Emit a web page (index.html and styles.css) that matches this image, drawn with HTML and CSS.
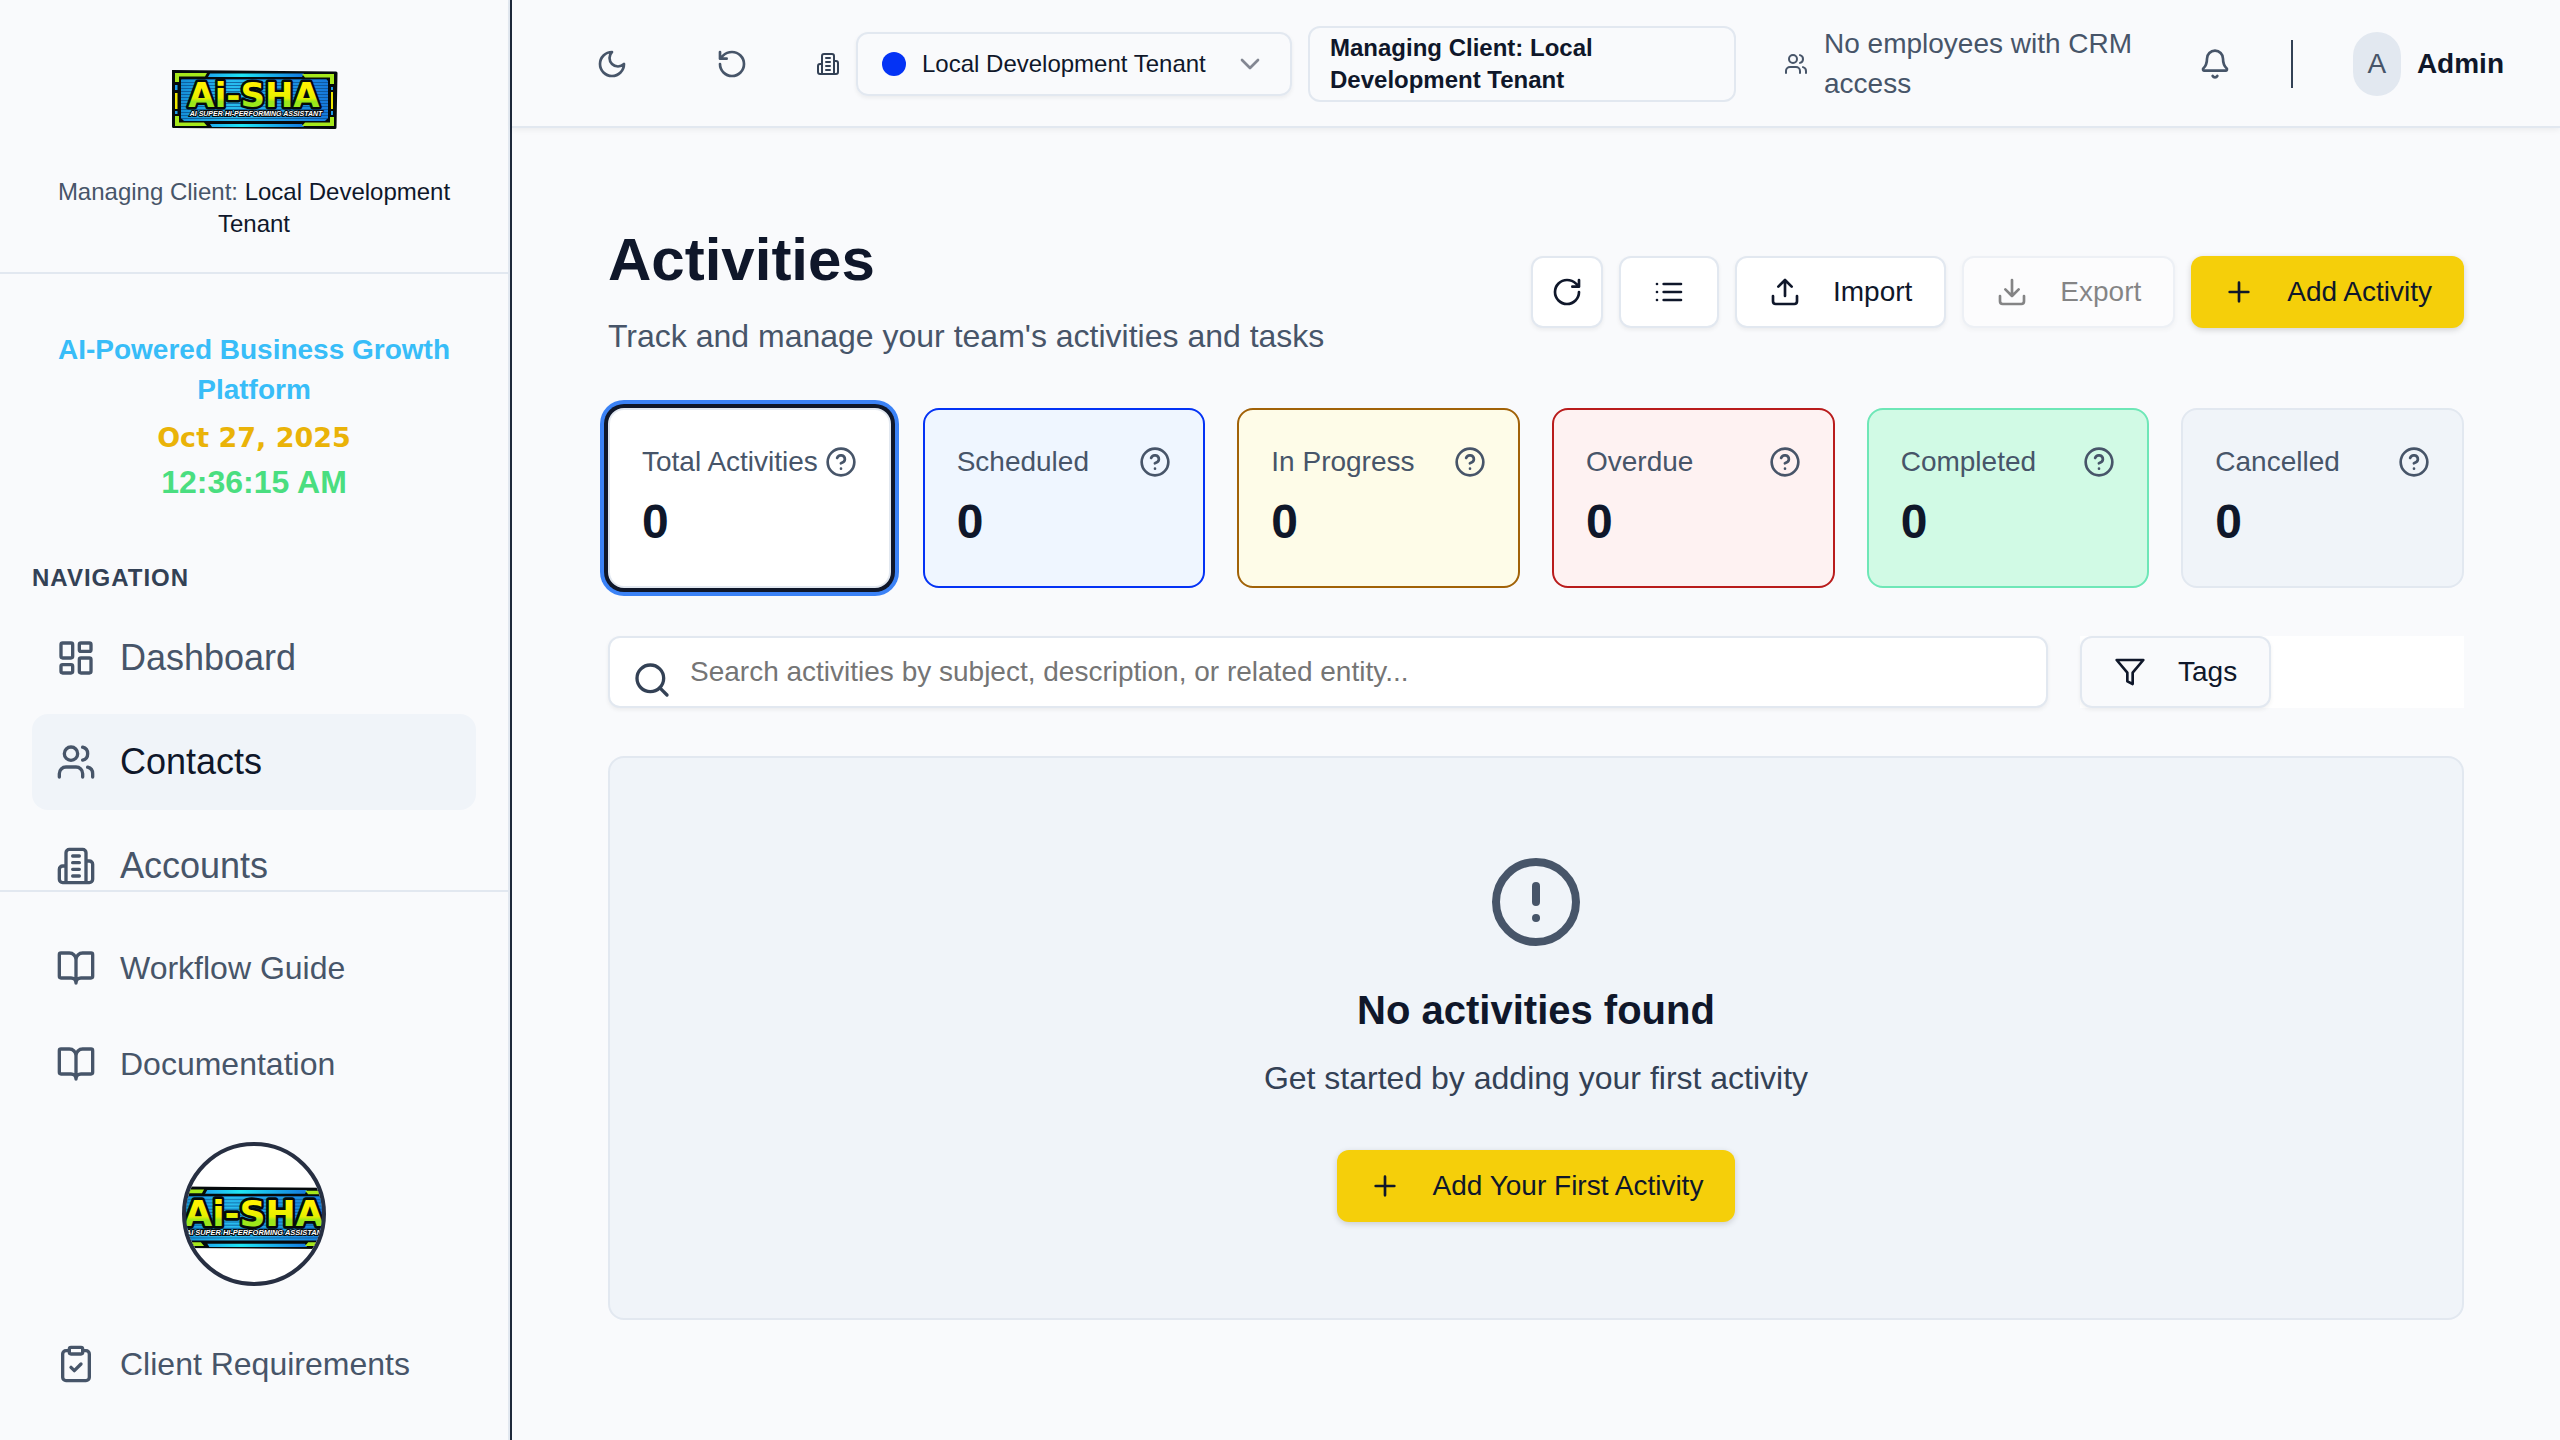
FILE: index.html
```html
<!DOCTYPE html>
<html lang="en">
<head>
<meta charset="utf-8">
<title>Activities</title>
<link rel="stylesheet" href="styles.css">
</head>
<body>
<svg class="sprite" aria-hidden="true">
  <defs>
    <linearGradient id="plate" x1="0" y1="0" x2="1" y2="0"><stop offset="0" stop-color="#1590d8"/><stop offset=".35" stop-color="#28bdf0"/><stop offset="1" stop-color="#1679dc"/></linearGradient>
    <linearGradient id="bar" x1="0" y1="0" x2="1" y2="0"><stop offset="0" stop-color="#1fa8f0"/><stop offset=".35" stop-color="#1fe6f5"/><stop offset="1" stop-color="#1478e0"/></linearGradient>
    <linearGradient id="letters" x1="0" y1="0" x2="0" y2="1"><stop offset=".3" stop-color="#fff200"/><stop offset=".58" stop-color="#e6f000"/><stop offset=".66" stop-color="#9be71a"/></linearGradient>
    <pattern id="lines" width="4" height="3" patternUnits="userSpaceOnUse"><path d="M0 2.5h4" stroke="#0a4a88" stroke-width="1" opacity=".7"/></pattern>
    <symbol id="logo" viewBox="0 0 172 128">
      <path d="M4 38 168 39.500Q169.500 39.500 169.500 41L168.500 95.500Q168.500 97 167 97L5.500 96Q4 96 4 94.500Z" fill="#050a0c"/>
      <path d="M42 41.500H136L134 45H40Z M42 92H134L136 95H44Z" fill="url(#bar)"/>
      <path d="M7 41H39L37 44.500H11V50H7Z M134 42H166V52H162V45.500H137Z M7 84H11V90.500H36L39 94H7Z M134 94 137 90.500H162V85H166V94Z" fill="#a6e81c"/>
      <path d="M7 61h2.500v16H7z M163 60h2v17h-2z" fill="#f0e800"/>
      <path d="M7 53h2.500v5H7z M163 55h2v3h-2z M7 79h2.500v3H7z M163 79h2v4h-2z" fill="#1f9bea"/>
      <path d="M14 47H158L160 49V86L157 89H16L13 86V48Z" fill="url(#plate)"/>
      <path d="M14 47H158L160 49V86L157 89H16L13 86V48Z" fill="url(#lines)"/>
      <text class="logo-name" x="86" y="75" text-anchor="middle">Ai-SHA</text>
      <text class="logo-line" x="88" y="84" text-anchor="middle">AI SUPER HI-PERFORMING ASSISTANT</text>
    </symbol>
    <symbol id="dashboard" viewBox="0 0 24 24"><rect x="3" y="3" width="7" height="9" rx="1"/><rect x="14" y="3" width="7" height="5" rx="1"/><rect x="14" y="12" width="7" height="9" rx="1"/><rect x="3" y="16" width="7" height="5" rx="1"/></symbol>
    <symbol id="users" viewBox="0 0 24 24"><path d="M16 21v-2a4 4 0 0 0-4-4H6a4 4 0 0 0-4 4v2"/><circle cx="9" cy="7" r="4"/><path d="M22 21v-2a4 4 0 0 0-3-3.870M16 3.130a4 4 0 0 1 0 7.750"/></symbol>
    <symbol id="building" viewBox="0 0 24 24"><path d="M6 22V4a2 2 0 0 1 2-2h8a2 2 0 0 1 2 2v18ZM6 12H4a2 2 0 0 0-2 2v6a2 2 0 0 0 2 2h2M18 9h2a2 2 0 0 1 2 2v9a2 2 0 0 1-2 2h-2M10 6h4M10 10h4M10 14h4M10 18h4"/></symbol>
    <symbol id="book" viewBox="0 0 24 24"><path d="M12 7v14M3 18a1 1 0 0 1-1-1V4a1 1 0 0 1 1-1h5a4 4 0 0 1 4 4 4 4 0 0 1 4-4h5a1 1 0 0 1 1 1v13a1 1 0 0 1-1 1h-6a3 3 0 0 0-3 3 3 3 0 0 0-3-3z"/></symbol>
    <symbol id="clipboard" viewBox="0 0 24 24"><rect x="8" y="2" width="8" height="4" rx="1"/><path d="M16 4h2a2 2 0 0 1 2 2v14a2 2 0 0 1-2 2H6a2 2 0 0 1-2-2V6a2 2 0 0 1 2-2h2M9 14l2 2 4-4"/></symbol>
    <symbol id="moon" viewBox="0 0 24 24"><path d="M12 3a6 6 0 0 0 9 9 9 9 0 1 1-9-9Z"/></symbol>
    <symbol id="undo" viewBox="0 0 24 24"><path d="M3 12a9 9 0 1 0 9-9 9.750 9.750 0 0 0-6.740 2.740L3 8M3 3v5h5"/></symbol>
    <symbol id="refresh" viewBox="0 0 24 24"><path d="M21 12a9 9 0 1 1-9-9c2.520 0 4.930 1 6.740 2.740L21 8M21 3v5h-5"/></symbol>
    <symbol id="bell" viewBox="0 0 24 24"><path d="M10.268 21a2 2 0 0 0 3.464 0M3.262 15.326A1 1 0 0 0 4 17h16a1 1 0 0 0 .740-1.673C19.410 13.956 18 12.499 18 8A6 6 0 0 0 6 8c0 4.499-1.411 5.956-2.738 7.326"/></symbol>
    <symbol id="chevron" viewBox="0 0 24 24"><path d="m6 9 6 6 6-6"/></symbol>
    <symbol id="list" viewBox="0 0 24 24"><path d="M3 6h.010M3 12h.010M3 18h.010M8 6h13M8 12h13M8 18h13"/></symbol>
    <symbol id="upload" viewBox="0 0 24 24"><path d="M21 15v4a2 2 0 0 1-2 2H5a2 2 0 0 1-2-2v-4M17 8l-5-5-5 5M12 3v12"/></symbol>
    <symbol id="download" viewBox="0 0 24 24"><path d="M21 15v4a2 2 0 0 1-2 2H5a2 2 0 0 1-2-2v-4M7 10l5 5 5-5M12 15V3"/></symbol>
    <symbol id="plus" viewBox="0 0 24 24"><path d="M5 12h14M12 5v14"/></symbol>
    <symbol id="help" viewBox="0 0 24 24"><circle cx="12" cy="12" r="10"/><path d="M9.090 9a3 3 0 0 1 5.830 1c0 2-3 3-3 3M12 17h.010"/></symbol>
    <symbol id="search" viewBox="0 0 24 24"><circle cx="11" cy="11" r="8"/><path d="m21 21-4.300-4.300"/></symbol>
    <symbol id="filter" viewBox="0 0 24 24"><path d="M22 3H2l8 9.460V19l4 2v-8.540Z"/></symbol>
    <symbol id="alert" viewBox="0 0 24 24"><circle cx="12" cy="12" r="10"/><path d="M12 8v4M12 16h.010"/></symbol>
  </defs>
</svg>

<div class="app">
  <aside class="sidebar">
    <div class="brand">
      <svg class="brand-logo" role="img" aria-label="Ai-SHA"><use href="#logo"/></svg>
      <p class="brand-client">Managing Client: <span>Local Development Tenant</span></p>
    </div>
    <div class="menu">
      <div class="tagline">
        <p class="tagline-title">AI-Powered Business Growth Platform</p>
        <p class="tagline-date">Oct 27, 2025</p>
        <p class="tagline-time">12:36:15 AM</p>
      </div>
      <nav class="nav">
        <h2 class="nav-title">Navigation</h2>
        <a class="nav-item" href="#"><svg class="icon icon-nav"><use href="#dashboard"/></svg>Dashboard</a>
        <a class="nav-item nav-item-active" href="#"><svg class="icon icon-nav"><use href="#users"/></svg>Contacts</a>
        <a class="nav-item" href="#"><svg class="icon icon-nav"><use href="#building"/></svg>Accounts</a>
      </nav>
    </div>
    <div class="sidebar-foot">
      <a class="foot-item" href="#"><svg class="icon icon-nav"><use href="#book"/></svg>Workflow Guide</a>
      <a class="foot-item" href="#"><svg class="icon icon-nav"><use href="#book"/></svg>Documentation</a>
      <button class="assistant" type="button" aria-label="Open assistant"><svg class="assistant-logo" viewBox="0 0 128 128"><use href="#logo" x="-22" y="0" width="172" height="128"/></svg></button>
      <a class="foot-item" href="#"><svg class="icon icon-nav"><use href="#clipboard"/></svg>Client Requirements</a>
    </div>
  </aside>

  <div class="page">
    <header class="topbar">
      <div class="topbar-tools">
        <button class="tool" type="button" aria-label="Toggle theme"><svg class="icon"><use href="#moon"/></svg></button>
        <button class="tool" type="button" aria-label="Reset"><svg class="icon"><use href="#undo"/></svg></button>
      </div>
      <div class="tenant">
        <svg class="icon icon-small"><use href="#building"/></svg>
        <div class="tenant-select">
          <span class="tenant-dot"></span>
          <select aria-label="Tenant"><option>Local Development Tenant</option></select>
          <svg class="icon tenant-chevron"><use href="#chevron"/></svg>
        </div>
        <div class="client-badge">Managing Client: Local Development Tenant</div>
      </div>
      <div class="employees"><svg class="icon icon-small"><use href="#users"/></svg><span>No employees with CRM access</span></div>
      <div class="account">
        <button class="tool" type="button" aria-label="Notifications"><svg class="icon"><use href="#bell"/></svg></button>
        <span class="account-divider"></span>
        <button class="user" type="button"><span class="avatar">A</span>Admin</button>
      </div>
    </header>

    <main class="content">
      <div class="heading">
        <div>
          <h1>Activities</h1>
          <p class="subtitle">Track and manage your team's activities and tasks</p>
        </div>
        <div class="actions">
          <button class="btn btn-square" type="button" aria-label="Refresh"><svg class="icon"><use href="#refresh"/></svg></button>
          <button class="btn" type="button" aria-label="List view"><svg class="icon"><use href="#list"/></svg></button>
          <button class="btn" type="button"><svg class="icon"><use href="#upload"/></svg>Import</button>
          <button class="btn" type="button" disabled><svg class="icon"><use href="#download"/></svg>Export</button>
          <button class="btn btn-primary" type="button"><svg class="icon"><use href="#plus"/></svg>Add Activity</button>
        </div>
      </div>

      <div class="stats">
        <section class="stat stat-total"><div class="stat-label">Total Activities<svg class="icon"><use href="#help"/></svg></div><p class="stat-value">0</p></section>
        <section class="stat stat-scheduled"><div class="stat-label">Scheduled<svg class="icon"><use href="#help"/></svg></div><p class="stat-value">0</p></section>
        <section class="stat stat-progress"><div class="stat-label">In Progress<svg class="icon"><use href="#help"/></svg></div><p class="stat-value">0</p></section>
        <section class="stat stat-overdue"><div class="stat-label">Overdue<svg class="icon"><use href="#help"/></svg></div><p class="stat-value">0</p></section>
        <section class="stat stat-completed"><div class="stat-label">Completed<svg class="icon"><use href="#help"/></svg></div><p class="stat-value">0</p></section>
        <section class="stat stat-cancelled"><div class="stat-label">Cancelled<svg class="icon"><use href="#help"/></svg></div><p class="stat-value">0</p></section>
      </div>

      <div class="filters">
        <div class="search">
          <svg class="icon icon-nav search-icon"><use href="#search"/></svg>
          <input type="text" aria-label="Search activities" placeholder="Search activities by subject, description, or related entity...">
        </div>
        <div class="tags"><button class="btn btn-muted" type="button"><svg class="icon"><use href="#filter"/></svg>Tags</button></div>
      </div>

      <section class="empty">
        <svg class="icon icon-empty"><use href="#alert"/></svg>
        <h2>No activities found</h2>
        <p>Get started by adding your first activity</p>
        <button class="btn btn-primary" type="button"><svg class="icon"><use href="#plus"/></svg>Add Your First Activity</button>
      </section>
    </main>
  </div>
</div>
</body>
</html>
```

FILE: styles.css
```css
*, *::before, *::after { box-sizing: border-box; }

:root {
  --bg: #f9fafc;
  --panel: #f0f4f9;
  --line: #e2e8f0;
  --ink: #0f172a;
  --strong: #334155;
  --muted: #475569;
  --accent: #f5cf0a;
  --shadow: 0 2px 4px rgba(0, 0, 0, .06);
}

body {
  margin: 0;
  background: var(--bg);
  color: var(--ink);
  font: 28px/40px "Liberation Sans", Arial, sans-serif;
}

h1, h2, p { margin: 0; }
a { color: inherit; text-decoration: none; }
button, input, select { font: inherit; color: inherit; }
button { margin: 0; padding: 0; border: 0; background: none; cursor: pointer; }

.sprite { position: absolute; width: 0; height: 0; }

.icon {
  flex: none;
  display: block;
  width: 32px;
  height: 32px;
  fill: none;
  stroke: currentColor;
  stroke-width: 2;
  stroke-linecap: round;
  stroke-linejoin: round;
}
.icon-small { width: 24px; height: 24px; }
.icon-nav { width: 40px; height: 40px; }
.icon-empty { width: 96px; height: 96px; color: var(--muted); }

.app { display: flex; min-height: 100vh; }

/* Sidebar */
.sidebar {
  flex: none;
  display: flex;
  flex-direction: column;
  width: 510px;
  height: 100vh;
  border-right: 2px solid var(--line);
}
.brand {
  display: flex;
  flex-direction: column;
  gap: 16px;
  padding: 32px;
  border-bottom: 2px solid var(--line);
  text-align: center;
}
.brand-logo { display: block; width: 100%; height: 128px; }
.brand-client { font-size: 24px; line-height: 32px; color: var(--muted); }
.brand-client span { color: var(--ink); }
.logo-name {
  font: 700 34px/1 "DejaVu Sans", sans-serif;
  fill: url(#letters);
  stroke: #050a0c;
  stroke-width: 5px;
  stroke-linejoin: round;
  paint-order: stroke;
}
.logo-line {
  font: italic 700 7px/1 "Liberation Sans", sans-serif;
  fill: #fff;
  stroke: #050a0c;
  stroke-width: 2px;
  paint-order: stroke;
}

.menu {
  flex: 1;
  min-height: 0;
  overflow: hidden;
  display: flex;
  flex-direction: column;
  gap: 56px;
  padding: 56px 32px 0;
}
.tagline { text-align: center; font-weight: 700; }
.tagline-title { margin-bottom: 8px; color: #38bdf8; }
.tagline-date { color: #eab308; font-family: "Arial Black", "DejaVu Sans", sans-serif; font-size: 27px; }
.tagline-time { color: #4ade80; font-size: 32px; line-height: 48px; }

.nav { display: flex; flex-direction: column; gap: 8px; }
.nav-title {
  margin-bottom: 8px;
  font-size: 24px;
  line-height: 32px;
  letter-spacing: 1px;
  text-transform: uppercase;
  color: var(--strong);
}
.nav-item, .foot-item {
  display: flex;
  align-items: center;
  gap: 24px;
  padding: 24px;
  border-radius: 16px;
  color: var(--muted);
}
.nav-item { font-size: 36px; line-height: 48px; }
.nav-item-active { background: var(--panel); color: var(--ink); }
.nav-item-active .icon { color: var(--muted); }

.sidebar-foot {
  display: flex;
  flex-direction: column;
  gap: 8px;
  padding: 32px;
  border-top: 2px solid var(--line);
}
.foot-item { font-size: 32px; line-height: 40px; }
.assistant {
  align-self: center;
  width: 144px;
  height: 144px;
  margin: 26px 0;
  border: 4px solid #272f42;
  border-radius: 50%;
  background: #fff;
  overflow: hidden;
}
.assistant-logo { display: block; width: 100%; height: 100%; }

/* Top bar */
.page {
  flex: 1;
  min-width: 0;
  border-left: 2px solid #1e293b;
}
.topbar {
  display: flex;
  align-items: center;
  min-height: 128px;
  padding: 2px 56px 0 84px;
  border-bottom: 2px solid var(--line);
  box-shadow: 0 2px 6px rgba(0, 0, 0, .06);
  color: var(--muted);
}
.topbar-tools { display: flex; gap: 88px; margin-right: 68px; }
.tenant { display: flex; align-items: center; gap: 16px; margin-right: 48px; color: var(--strong); }
.tenant-select {
  display: flex;
  align-items: center;
  gap: 16px;
  width: 436px;
  height: 64px;
  padding: 0 24px;
  border: 2px solid var(--line);
  border-radius: 12px;
  box-shadow: var(--shadow);
}
.tenant-dot { flex: none; width: 24px; height: 24px; border-radius: 50%; background: #0433f5; }
.tenant-select select {
  flex: 1;
  min-width: 0;
  padding: 0;
  border: 0;
  background: none;
  appearance: none;
  font-size: 24px;
  line-height: 32px;
  color: var(--ink);
}
.tenant-chevron { color: var(--ink); opacity: .5; }
.client-badge {
  width: 428px;
  padding: 4px 20px;
  border: 2px solid var(--line);
  border-radius: 12px;
  font-size: 24px;
  font-weight: 700;
  line-height: 32px;
  color: var(--ink);
}
.employees { display: flex; align-items: center; gap: 16px; max-width: 376px; }
.account { display: flex; align-items: center; gap: 60px; margin-left: auto; }
.account-divider { width: 2px; height: 48px; background: var(--strong); }
.user { display: flex; align-items: center; gap: 16px; font-weight: 700; color: var(--ink); }
.avatar {
  display: flex;
  align-items: center;
  justify-content: center;
  width: 48px;
  height: 64px;
  border-radius: 24px;
  background: var(--line);
  font-weight: 400;
  color: var(--muted);
}

/* Content */
.content { display: flex; flex-direction: column; gap: 48px; padding: 96px; }
.heading { display: flex; align-items: center; justify-content: space-between; }
h1 { font-size: 60px; line-height: 72px; }
.subtitle { margin-top: 16px; font-size: 32px; line-height: 48px; color: var(--muted); }
.actions { display: flex; gap: 16px; }

.btn {
  display: flex;
  align-items: center;
  justify-content: center;
  gap: 32px;
  min-height: 72px;
  padding: 0 32px;
  border: 2px solid var(--line);
  border-radius: 12px;
  background: #fff;
  box-shadow: var(--shadow);
  white-space: nowrap;
  color: var(--ink);
}
.btn-square { width: 72px; padding: 0; }
.btn-primary { border: 0; background: var(--accent); box-shadow: 0 2px 6px rgba(0, 0, 0, .16); }
.btn-muted { background: var(--bg); }
.btn:disabled { opacity: .5; color: #111; }

.stats { display: grid; grid-template-columns: repeat(6, 1fr); gap: 32px; }
.stat { padding: 32px; border: 2px solid var(--line); border-radius: 16px; }
.stat-label { display: flex; align-items: center; justify-content: space-between; color: var(--muted); white-space: nowrap; }
.stat-value { margin-top: 8px; font-size: 48px; font-weight: 700; line-height: 64px; }
.stat-total { background: #fff; box-shadow: 0 0 0 4px #0f172a, 0 0 0 8px #3b82f6; }
.stat-scheduled { background: #eff6ff; border-color: #0433f5; }
.stat-progress { background: #fefce8; border-color: #a16207; }
.stat-overdue { background: #fef2f2; border-color: #b91c1c; }
.stat-completed { background: #d1fae5; border-color: #6ee7b7; }
.stat-cancelled { background: var(--panel); }

.filters { display: flex; gap: 32px; }
.search { position: relative; flex: 1; }
.search input {
  display: block;
  width: 100%;
  height: 72px;
  padding: 0 24px 0 80px;
  border: 2px solid var(--line);
  border-radius: 12px;
  background: #fff;
  box-shadow: var(--shadow);
}
.search input::placeholder { color: #757575; }
.search-icon { position: absolute; left: 24px; top: 24px; color: var(--strong); }
.tags { display: flex; width: 384px; background: #fff; }

.empty {
  display: flex;
  flex-direction: column;
  align-items: center;
  padding: 96px;
  border: 2px solid var(--line);
  border-radius: 16px;
  background: var(--panel);
  text-align: center;
}
.empty h2 { margin-top: 32px; font-size: 40px; line-height: 56px; }
.empty p { margin: 16px 0 48px; font-size: 32px; line-height: 48px; color: var(--strong); }
```
